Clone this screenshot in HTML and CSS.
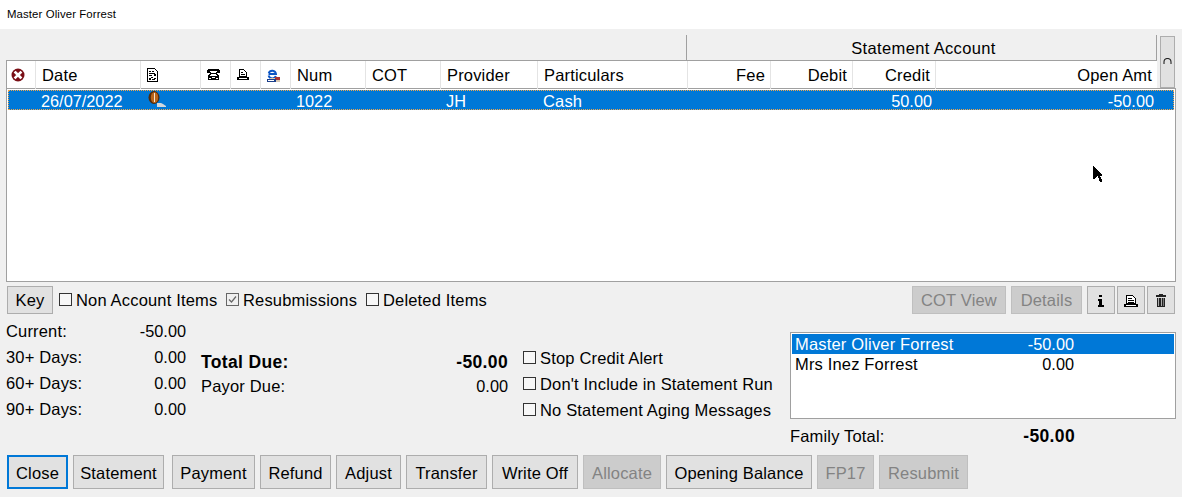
FILE: index.html
```html
<!DOCTYPE html>
<html lang="en">
<head>
<meta charset="utf-8">
<title>Master Oliver Forrest</title>
<link rel="stylesheet" href="styles.css">
</head>
<body>
<div class="window">
  <header class="titlebar">Master Oliver Forrest</header>

  <div class="head-wrap">
    <div class="head">
      <div class="band"><div class="band-title">Statement Account</div></div>
      <div class="cols colhead">
        <div class="c ic"><svg width="14" height="14" viewBox="0 0 14 14"><circle cx="7" cy="7" r="6.500" fill="#7a0f16"/><path d="M4.500 4.500l5 5M9.500 4.500l-5 5" stroke="#fff" stroke-width="2.600" stroke-linecap="square"/></svg></div>
        <div class="c">Date</div>
        <div class="c ic-doc"><svg width="11" height="14" viewBox="0 0 11 14" shape-rendering="crispEdges"><path d="M.5.5h7l3 3v10h-10z" fill="#fff" stroke="#000"/><path d="M2 3h2v1H2zM5 3h2v1H5zM2 5h6v1H2zM7 6h2v2H7zM2 7h3v1H2zM4 9h2v1H4zM2 10h2v2H2zM7 10h2v1H7zM5 11h3v1H5z"/></svg></div>
        <div class="c ic-mid"><svg width="13" height="11" viewBox="0 0 13 11" shape-rendering="crispEdges"><path d="M1 0h11v1h1v3h-4V3h1V2H3v1h1v1H0V1h1zM3 4h7v1h1v1h1v5H1V6h1V5h1z"/><path d="M4 5h5v1h1v1H3V6h1zM5 8h3v1H5zM2 9h2v1H2zM9 9h2v1H9z" fill="#fff"/></svg></div>
        <div class="c ic-mid"><svg width="12" height="11" viewBox="0 0 12 11" shape-rendering="crispEdges"><path d="M2.500.5h4l3 3v4h-7z" fill="#fff" stroke="#000"/><path d="M0 8h12v3H0zM4 3h2v1H4zM4 5h4v1H4z"/><path d="M2 9h8v1H2z" fill="#fff"/></svg></div>
        <div class="c ic-mid"><svg width="13" height="13" viewBox="0 0 13 13"><path d="M1.500 5h7.500a3.800 3.800 0 0 0-7.300-.8M8.800 7a3.800 3.800 0 0 1-7.200-.5" fill="none" stroke="#0b55c5" stroke-width="1.900"/><path d="M3 9h10v4H3z" fill="#d8c8b4"/><path d="M8 8h5v3H8z" fill="#a33"/><path d="M0 10h9v3H0z" fill="#1c3f8a"/><path d="M1 11h6v1H1z" fill="#fff"/></svg></div>
        <div class="c">Num</div>
        <div class="c">COT</div>
        <div class="c">Provider</div>
        <div class="c">Particulars</div>
        <div class="c r">Fee</div>
        <div class="c r">Debit</div>
        <div class="c r">Credit</div>
        <div class="c r">Open Amt</div>
      </div>
    </div>
    <button class="refresh" type="button" aria-label="Refresh"><svg width="9" height="7" viewBox="0 0 9 7"><path d="M1 6V4a3.300 3.300 0 0 1 7 0v2" fill="none" stroke="#222" stroke-width="1.100"/></svg></button>
  </div>

  <div class="box">
    <div class="cols row">
      <div class="c"></div>
      <div class="c">26/07/2022</div>
      <div class="c coin"><svg width="18" height="16" viewBox="0 0 18 16"><ellipse cx="6" cy="6.500" rx="5.500" ry="6.500" fill="#4f2a0c"/><ellipse cx="6.500" cy="6.500" rx="3.700" ry="5.500" fill="#b7641b"/><path d="M6.500 2v9" stroke="#f4e6d0" stroke-width="1"/><path d="M9 12h4l2 1 3 2v1H9z" fill="#cfd8df"/></svg></div>
      <div class="c"></div>
      <div class="c"></div>
      <div class="c"></div>
      <div class="c">1022</div>
      <div class="c"></div>
      <div class="c">JH</div>
      <div class="c txt">Cash</div>
      <div class="c r"></div>
      <div class="c r"></div>
      <div class="c r">50.00</div>
      <div class="c r">-50.00</div>
    </div>
  </div>

  <div class="toolbar">
    <button class="btn w-key" type="button">Key</button>
    <label class="check chk-a"><span class="box-mark"></span>Non Account Items</label>
    <label class="check chk-b"><span class="box-mark on"><svg width="11" height="11" viewBox="0 0 11 11"><path d="M2 5.500l2.500 2.500L9 2.500" fill="none" stroke="#666" stroke-width="1.200"/></svg></span>Resubmissions</label>
    <label class="check"><span class="box-mark"></span>Deleted Items</label>
    <div class="spacer"></div>
    <button class="btn off w-cot" type="button" disabled>COT View</button>
    <button class="btn off w-det" type="button" disabled>Details</button>
    <button class="btn w-ico ml-5" type="button" aria-label="Information"><svg width="8" height="12" viewBox="0 0 8 12" shape-rendering="crispEdges"><path d="M2 0h3v2H2zM1 4h4v6h2v2H1v-2h1V6H1z"/></svg></button>
    <button class="btn w-ico ml-2" type="button" aria-label="Print"><svg width="14" height="12" viewBox="0 0 14 12" shape-rendering="crispEdges"><path d="M2.500.5h6l3 3v5h-9z" fill="#fff" stroke="#000"/><path d="M4 3h4v1H4zM4 5h6v1H4zM4 7h6v1H4zM0 9h14v3H0z"/><path d="M2 10h10v1H2z" fill="#fff"/></svg></button>
    <button class="btn w-ico ml-2" type="button" aria-label="Delete"><svg width="12" height="13" viewBox="0 0 12 13" shape-rendering="crispEdges"><path d="M4 0h4v1h3v2H1V1h3zM2 4h8v9H2z" fill="#222"/><path d="M3 4h1v8H3zM6 4h1v8H6z" fill="#aaa"/><path d="M8 4h1v8H8z" fill="#777"/></svg></button>
  </div>

  <div class="summary">
    <div class="aging">
      <div class="line"><span>Current:</span><span class="n">-50.00</span></div>
      <div class="line"><span>30+ Days:</span><span class="n">0.00</span></div>
      <div class="line"><span>60+ Days:</span><span class="n">0.00</span></div>
      <div class="line"><span>90+ Days:</span><span class="n">0.00</span></div>
    </div>
    <div class="totals">
      <div class="tline strong"><span>Total Due:</span><span>-50.00</span></div>
      <div class="tline"><span>Payor Due:</span><span class="n">0.00</span></div>
    </div>
    <div class="options">
      <label class="check line-opt"><span class="box-mark"></span>Stop Credit Alert</label>
      <label class="check line-opt"><span class="box-mark"></span>Don't Include in Statement Run</label>
      <label class="check line-opt"><span class="box-mark"></span>No Statement Aging Messages</label>
    </div>
    <div class="family">
      <div class="listbox">
        <div class="item sel"><span class="name">Master Oliver Forrest</span><span class="amt n">-50.00</span></div>
        <div class="item"><span class="name">Mrs Inez Forrest</span><span class="amt n">0.00</span></div>
      </div>
      <div class="family-total"><span class="name-total">Family Total:</span><b class="amt-total strong">-50.00</b></div>
    </div>
  </div>

  <div class="actions">
    <button class="btn focus w-close" type="button">Close</button>
    <button class="btn w-stmt" type="button">Statement</button>
    <button class="btn w-pay" type="button">Payment</button>
    <button class="btn w-ref" type="button">Refund</button>
    <button class="btn w-adj" type="button">Adjust</button>
    <button class="btn w-tra" type="button">Transfer</button>
    <button class="btn w-wo" type="button">Write Off</button>
    <button class="btn off w-all" type="button" disabled>Allocate</button>
    <button class="btn w-ob" type="button">Opening Balance</button>
    <button class="btn off w-fp" type="button" disabled>FP17</button>
    <button class="btn off w-res" type="button" disabled>Resubmit</button>
  </div>

  <svg class="cursor" width="11" height="19" viewBox="0 0 11 19" shape-rendering="crispEdges"><path d="M0 0h1v1h1v1h1v1h1v1h1v1h1v1h1v1h1v1h1v2H7v1h1v2h1v3H7v-1H6v-3H5v-2H4v1H3v1H2v1H0z"/></svg>
</div>
</body>
</html>
```
FILE: styles.css
```css
* { box-sizing: border-box; }
html, body { margin: 0; padding: 0; }
body {
  width: 1182px;
  height: 497px;
  overflow: hidden;
  background: #f0f0f0;
  color: #000;
  font-family: "Liberation Sans", Arial, sans-serif;
  font-size: 16.5px;
  letter-spacing: 0.17px;
}
.n { font-size: 16.3px; letter-spacing: 0; }
.window { position: relative; height: 497px; }

.titlebar {
  height: 29px;
  background: #fff;
  padding-left: 7px;
  font-size: 11.4px;
  letter-spacing: 0.1px;
  line-height: 28px;
}

.head-wrap { display: flex; margin: 6px 7px 0 6px; }
.head { width: 1151px; }
.band {
  height: 26px;
  padding-left: 680px;
  border-bottom: 1px solid #a0a0a0;
}
.band-title {
  height: 25px;
  padding-left: 4px;
  line-height: 26px;
  text-align: center;
  border-left: 1px solid #a0a0a0;
  border-right: 1px solid #a0a0a0;
  letter-spacing: 0.35px;
}
.refresh {
  width: 15px;
  height: 52px;
  margin: 1px 0 0 3px;
  padding: 0 0 2px;
  background: #e1e1e1;
  border: 1px solid #adadad;
  display: flex;
  align-items: center;
  justify-content: center;
}

.cols {
  display: grid;
  grid-template-columns: 29px 105px 60px 30px 30px 30px 75px 75px 97px 150px 83px 82px 83px 222px;
}
.colhead {
  height: 27px;
  background: #fff;
  line-height: 28px;
  border-left: 1px solid #a0a0a0;
}
.colhead .c {
  border-right: 1px solid #e4e4e4;
  padding: 0 6px;
  white-space: nowrap;
}
.colhead .c.r { padding: 0 5px 0 0; }
.colhead .c.r:last-child { border-right: 0; padding-right: 6px; }
.c.r { text-align: right; }
.colhead svg { display: block; }
.colhead .c.ic { padding: 7px 0 0 4px; }
.colhead .c.ic-doc { padding: 7px 0 0 6px; }
.colhead .c.ic-mid { padding: 8px 0 0 6px; display: flex; align-items: flex-start; }

.box {
  height: 194px;
  margin: 0 6px;
  padding: 1px;
  background: #fff;
  border: 1px solid #a0a0a0;
}
.row {
  height: 20px;
  background: #0078d7;
  color: #fff;
  font-size: 16.3px;
  letter-spacing: 0;
  line-height: 23px;
  outline: 1px dotted #f3a64a;
  outline-offset: -1px;
  grid-template-columns: 28px 105px 60px 30px 30px 30px 75px 75px 97px 150px 83px 82px 83px 222px;
}
.row .c { padding-left: 5px; white-space: nowrap; }
.row .txt { font-size: 16.5px; letter-spacing: 0.17px; }
.row .c.r { padding: 0 4px 0 0; }
.row .coin { padding-left: 7px; }
.row .coin svg { display: block; margin-top: 1px; }

.toolbar {
  display: flex;
  align-items: flex-start;
  height: 28px;
  margin-top: 4px;
  padding: 0 7px;
}
.spacer { flex: 1; }
.btn {
  height: 28px;
  padding: 1px 0 0;
  background: #e1e1e1;
  border: 1px solid #adadad;
  color: #000;
  font: inherit;
  letter-spacing: inherit;
  display: inline-flex;
  align-items: center;
  justify-content: center;
  flex: none;
}
.btn.off { background: #cccccc; border-color: #bfbfbf; color: #838383; }
.btn.focus { border: 2px solid #0078d7; }

.check { display: flex; align-items: center; white-space: nowrap; padding-top: 2px; }
.box-mark {
  width: 13px;
  height: 13px;
  margin: -2px 4px 0 0;
  border: 1px solid #333;
  background: #f7f7f7;
  display: flex;
  align-items: center;
  justify-content: center;
  flex: none;
}
.box-mark.on { border-color: #666; background: #f0f0f0; }
.toolbar .check { height: 26px; }
.chk-a { width: 167px; margin-left: 6px; }
.chk-b { width: 140px; }
.w-key { width: 46px; }
.w-cot { width: 94px; margin-right: 5px; }
.w-det { width: 71px; }
.w-ico { width: 28px; }
.ml-5 { margin-left: 5px; }
.ml-2 { margin-left: 2px; }

.summary {
  display: flex;
  height: 137px;
  margin-top: 4px;
  padding-left: 6px;
}
.aging { width: 180px; }
.line { display: flex; justify-content: space-between; height: 26px; line-height: 26px; }
.totals { width: 307px; margin-left: 15px; padding-top: 32px; }
.tline { display: flex; justify-content: space-between; height: 24px; line-height: 24px; }
.strong { font-size: 17.5px; font-weight: 700; letter-spacing: 0.35px; }
.options { width: 267px; margin-left: 15px; padding-top: 26px; }
.line-opt { height: 26px; }
.family { width: 386px; padding-top: 14px; }
.listbox {
  height: 87px;
  padding: 1px;
  background: #fff;
  border: 1px solid #a0a0a0;
}
.item {
  display: flex;
  height: 20px;
  line-height: 20px;
  padding-left: 3px;
}
.item.sel { background: #0078d7; color: #fff; }
.name { width: 210px; }
.amt { width: 69px; text-align: right; }
.family-total { display: flex; height: 24px; margin-top: 5px; line-height: 24px; }
.name-total { width: 210px; }
.amt-total { width: 75px; text-align: right; }

.actions { display: flex; gap: 5px; padding-left: 7px; }
.actions .btn { height: 34px; padding-top: 2px; }
.w-close { width: 61px; }
.w-stmt { width: 91px; margin-right: 3px; }
.w-pay { width: 83px; }
.w-ref { width: 71px; }
.w-adj { width: 65px; }
.w-tra { width: 81px; }
.w-wo { width: 86px; }
.w-all { width: 78px; }
.w-ob { width: 146px; }
.w-fp { width: 57px; }
.w-res { width: 89px; }

.cursor { position: absolute; left: 1093px; top: 166px; }
```
